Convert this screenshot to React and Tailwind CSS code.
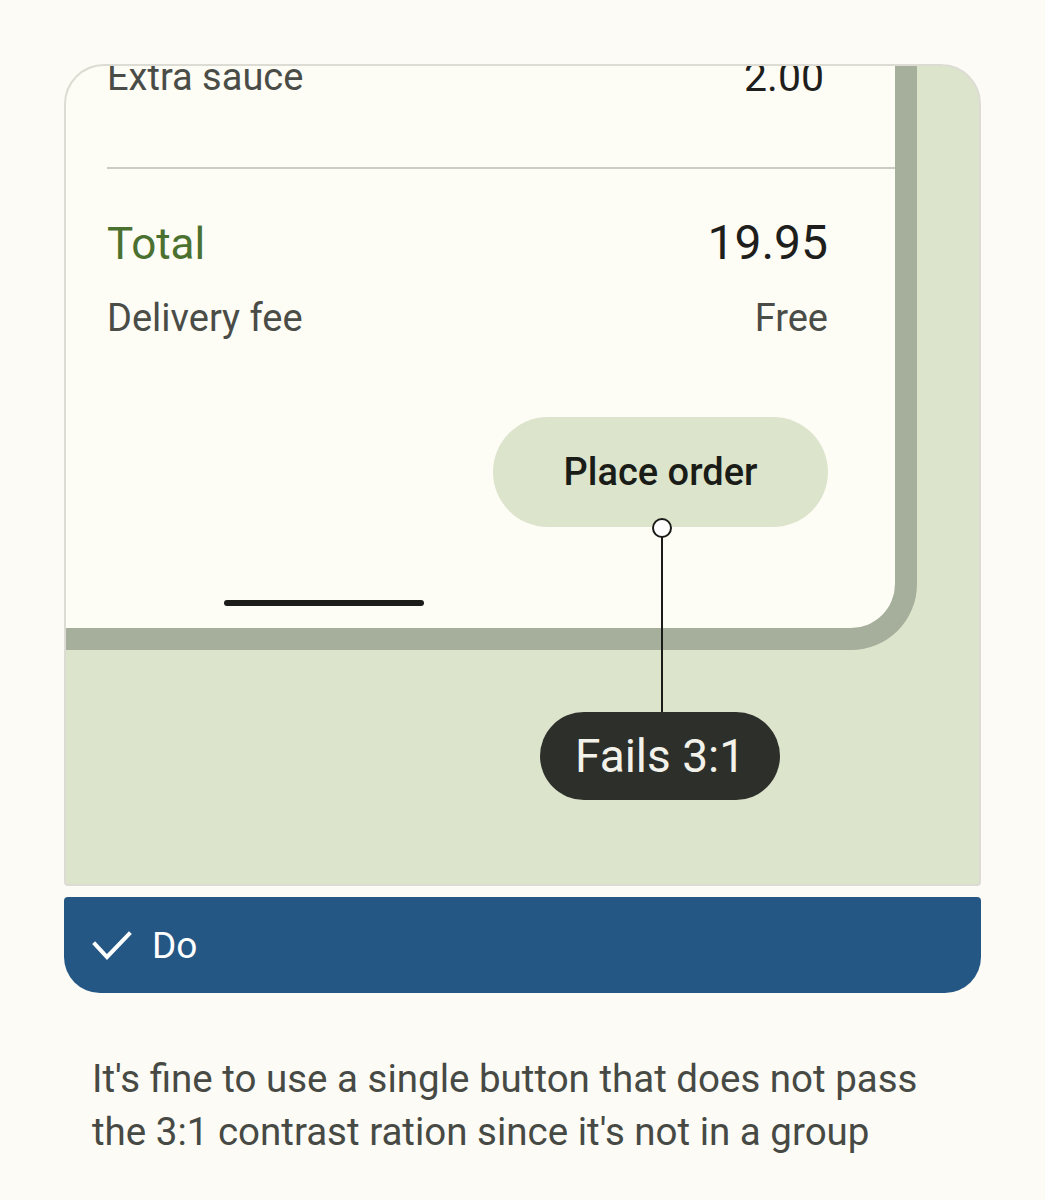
import React from "react";

const font = { fontFamily: "Roboto, 'Noto Sans', sans-serif" };

const CheckIcon = ({ className }) => (
    <svg viewBox="0 0 40 32" className={className} fill="none">
        <path d="M3 15 L15 28 L37 5" stroke="currentColor" strokeWidth="4" strokeLinecap="square" />
    </svg>
);

const PhoneMock = () => {
    return (
        <div className="w-[851px] h-[584px] shrink-0 bg-[#fdfcf5] border-r-[22px] border-b-[22px] border-[#a6ae9c] rounded-br-[66px] flex flex-col">
            {/* cut-off row from the list above */}
            <div className="-mt-[11px] pl-[41px] pr-[67px] flex justify-between text-[38px] leading-[44px] text-[#4a4d47]">
                <span>Extra sauce</span>
                <span className="text-[#1e1f1c] text-[41px] pr-[4px]">2.00</span>
            </div>
            <div className="mt-[68px] ml-[41px] h-[2px] bg-[#c9cdc2]" />
            <div className="mt-[46px] pl-[41px] pr-[67px] flex justify-between items-baseline leading-[56px]">
                <span className="text-[44px] text-[#4b7131]">Total</span>
                <span className="text-[48px] text-[#1e1f1c]">19.95</span>
            </div>
            <div className="mt-[24px] pl-[41px] pr-[67px] flex justify-between text-[38px] leading-[44px] text-[#4a4d47]">
                <span>Delivery fee</span>
                <span>Free</span>
            </div>
            <div className="mt-[77px] pr-[67px] flex justify-end">
                <button className="w-[335px] h-[110px] rounded-full bg-[#dce5cc] text-[38px] font-medium text-[#1a1c18]">
                    Place order
                </button>
            </div>
            <div className="mt-[73px] ml-[158px] w-[200px] h-[6px] rounded-full bg-[#1c1d1a]" />
        </div>
    );
};

export default function App() {
    return (
        <div className="min-h-screen w-full bg-[#fcfbf5] px-16 pt-16 pb-10" style={font}>
            <div className="relative h-[822px] rounded-t-[40px] rounded-b-[4px] border-2 border-[#dddcd4] bg-[#dce5cc] overflow-hidden">
                <PhoneMock />

                {/* annotation */}
                <svg className="absolute left-[584px] top-[450px] w-[24px] h-[200px]" viewBox="0 0 24 200" fill="none">
                    <line x1="12" y1="20" x2="12" y2="198" stroke="#1b1c19" strokeWidth="2" />
                    <circle cx="12" cy="12" r="9" fill="#ffffff" stroke="#1b1c19" strokeWidth="2" />
                </svg>
                <div className="absolute left-[474px] top-[646px] w-[240px] h-[88px] rounded-full bg-[#2d2f2b] flex items-center justify-center text-[46px] text-[#f2f2ea]">
                    Fails 3:1
                </div>
            </div>

            <div className="mt-[11px] h-[96px] rounded-t-[4px] rounded-b-[36px] bg-[#255785] flex items-center pl-[28px] gap-[20px] text-white">
                <CheckIcon className="w-[40px] h-[32px]" />
                <span className="text-[37px] leading-none">Do</span>
            </div>

            <p className="mt-[59px] ml-[28px] w-[870px] text-[38.5px] leading-[53px] text-[#474a44]">
                It's fine to use a single button that does not pass the 3:1 contrast ration since it's not in a group
            </p>
        </div>
    );
}
